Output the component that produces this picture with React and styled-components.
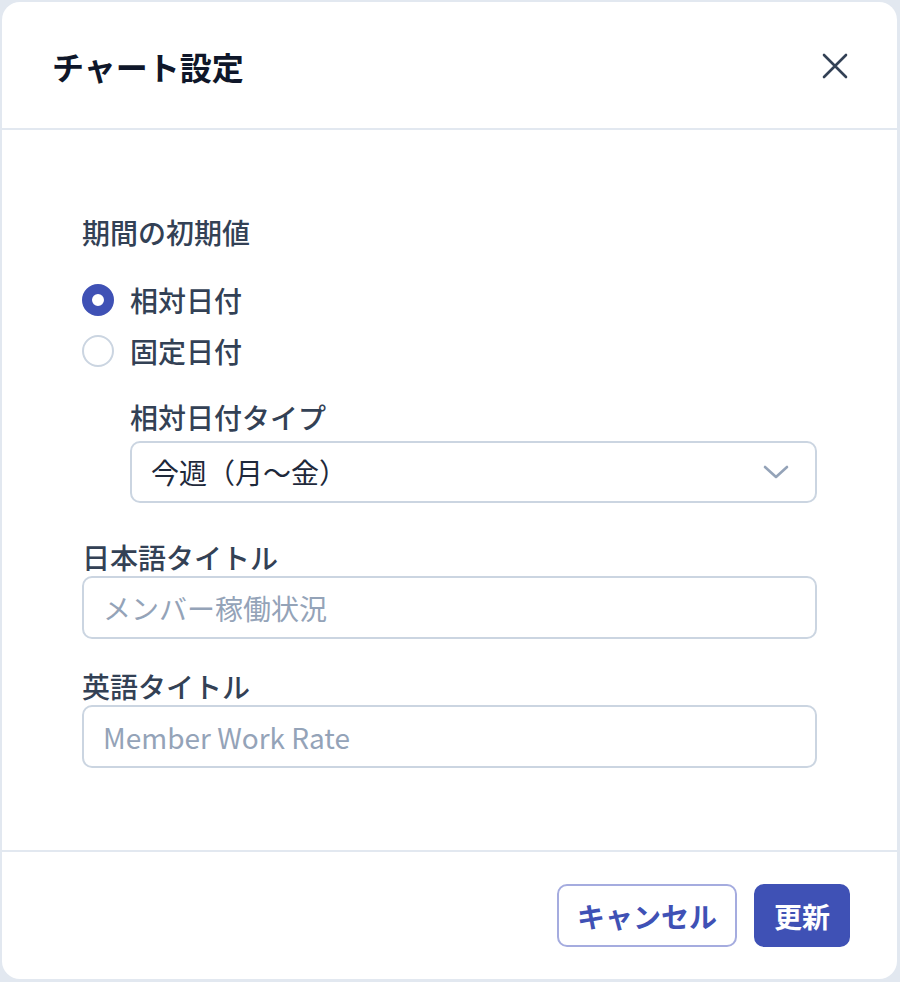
import React, { useState } from 'react'
import styled, { createGlobalStyle } from 'styled-components'

const GlobalStyle = createGlobalStyle`
  html, body {
    margin: 0;
    padding: 0;
    background: #e2e8f0;
  }
  * {
    box-sizing: border-box;
  }
  body {
    font-family: 'Noto Sans CJK JP', 'Noto Sans', sans-serif;
  }
`

export default function App() {
  const [mode, setMode] = useState('relative')

  return (
    <>
      <GlobalStyle />
      <Dialog>
        <Header>
          <Title>チャート設定</Title>
          <CloseButton aria-label="close">
            <svg width="26" height="26" viewBox="0 0 26 26" fill="none">
              <path d="M2 2L24 24M24 2L2 24" stroke="#334155" strokeWidth="2.6" strokeLinecap="round" />
            </svg>
          </CloseButton>
        </Header>

        <Body>
          <SectionLabel>期間の初期値</SectionLabel>
          <RadioGroup>
            <RadioRow onClick={() => setMode('relative')}>
              <Radio $checked={mode === 'relative'} />
              <RadioText>相対日付</RadioText>
            </RadioRow>
            <RadioRow onClick={() => setMode('fixed')}>
              <Radio $checked={mode === 'fixed'} />
              <RadioText>固定日付</RadioText>
            </RadioRow>
          </RadioGroup>

          <SubField>
            <FieldLabel $gap={7}>相対日付タイプ</FieldLabel>
            <Select>
              <SelectValue>今週（月〜金）</SelectValue>
              <svg width="26" height="14" viewBox="0 0 26 14" fill="none">
                <path d="M2 2L13 12L24 2" stroke="#94a3b8" strokeWidth="2.6" strokeLinecap="round" strokeLinejoin="round" />
              </svg>
            </Select>
          </SubField>

          <Field $top={37}>
            <FieldLabel>日本語タイトル</FieldLabel>
            <Input placeholder="メンバー稼働状況" />
          </Field>

          <Field $top={30}>
            <FieldLabel>英語タイトル</FieldLabel>
            <Input placeholder="Member Work Rate" />
          </Field>
        </Body>

        <Footer>
          <CancelButton>キャンセル</CancelButton>
          <PrimaryButton>更新</PrimaryButton>
        </Footer>
      </Dialog>
    </>
  )
}

const Dialog = styled.div`
  display: flex;
  flex-direction: column;
  margin: 2px 3px 3px 2px;
  height: calc(100vh - 5px);
  background: #fff;
  border-radius: 18px;
  overflow: hidden;
`

const Header = styled.div`
  display: flex;
  align-items: center;
  justify-content: space-between;
  height: 128px;
  padding: 2px 49px 0 50px;
  border-bottom: 2px solid #e2e8f0;
`

const Title = styled.h2`
  margin: 0;
  font-size: 32px;
  font-weight: 700;
  color: #0f172a;
`

const CloseButton = styled.button`
  display: flex;
  align-items: center;
  justify-content: center;
  padding: 0;
  border: none;
  background: none;
  cursor: pointer;
`

const Body = styled.div`
  flex: 1;
  display: flex;
  flex-direction: column;
  padding: 82px 80px 0 80px;
`

const SectionLabel = styled.div`
  font-size: 28px;
  line-height: 40px;
  font-weight: 500;
  color: #334155;
`

const RadioGroup = styled.div`
  display: flex;
  flex-direction: column;
  margin-top: 22px;
`

const RadioRow = styled.label`
  display: flex;
  align-items: center;
  gap: 16px;
  height: 51px;
  cursor: pointer;
`

const Radio = styled.span`
  width: 32px;
  height: 32px;
  border-radius: 50%;
  flex-shrink: 0;
  border: ${(p) => (p.$checked ? '10px solid #3f51b5' : '2px solid #cbd5e1')};
  background: #fff;
`

const RadioText = styled.span`
  font-size: 28px;
  font-weight: 500;
  color: #334155;
`

const SubField = styled.div`
  display: flex;
  flex-direction: column;
  margin: 24px 0 0 48px;
`

const Field = styled.div`
  display: flex;
  flex-direction: column;
  margin-top: ${(p) => p.$top || 32}px;
`

const FieldLabel = styled.div`
  font-size: 28px;
  line-height: 34px;
  font-weight: 500;
  color: #334155;
  margin-bottom: ${(p) => p.$gap || 2}px;
`

const Select = styled.div`
  display: flex;
  align-items: center;
  justify-content: space-between;
  height: 62px;
  padding: 0 26px 0 19px;
  border: 2px solid #cbd5e1;
  border-radius: 10px;
  cursor: pointer;
`

const SelectValue = styled.span`
  font-size: 28px;
  color: #1e293b;
`

const Input = styled.input`
  height: 63px;
  padding: 0 19px;
  border: 2px solid #cbd5e1;
  border-radius: 10px;
  font-family: 'Noto Sans CJK JP', 'Noto Sans', sans-serif;
  font-size: 28px;
  color: #1e293b;
  outline: none;

  &::placeholder {
    color: #94a3b8;
  }
`

const Footer = styled.div`
  display: flex;
  align-items: center;
  justify-content: flex-end;
  gap: 17px;
  height: 129px;
  padding: 0 47px 0 0;
  border-top: 2px solid #e2e8f0;
`

const BaseButton = styled.button`
  height: 63px;
  padding: 0 18px;
  border-radius: 10px;
  font-family: 'Noto Sans CJK JP', 'Noto Sans', sans-serif;
  font-size: 28px;
  font-weight: 700;
  cursor: pointer;
`

const CancelButton = styled(BaseButton)`
  background: #fff;
  color: #3f51b5;
  border: 2px solid #a5acdf;
`

const PrimaryButton = styled(BaseButton)`
  background: #3f51b5;
  color: #fff;
  border: 2px solid #3f51b5;
`
